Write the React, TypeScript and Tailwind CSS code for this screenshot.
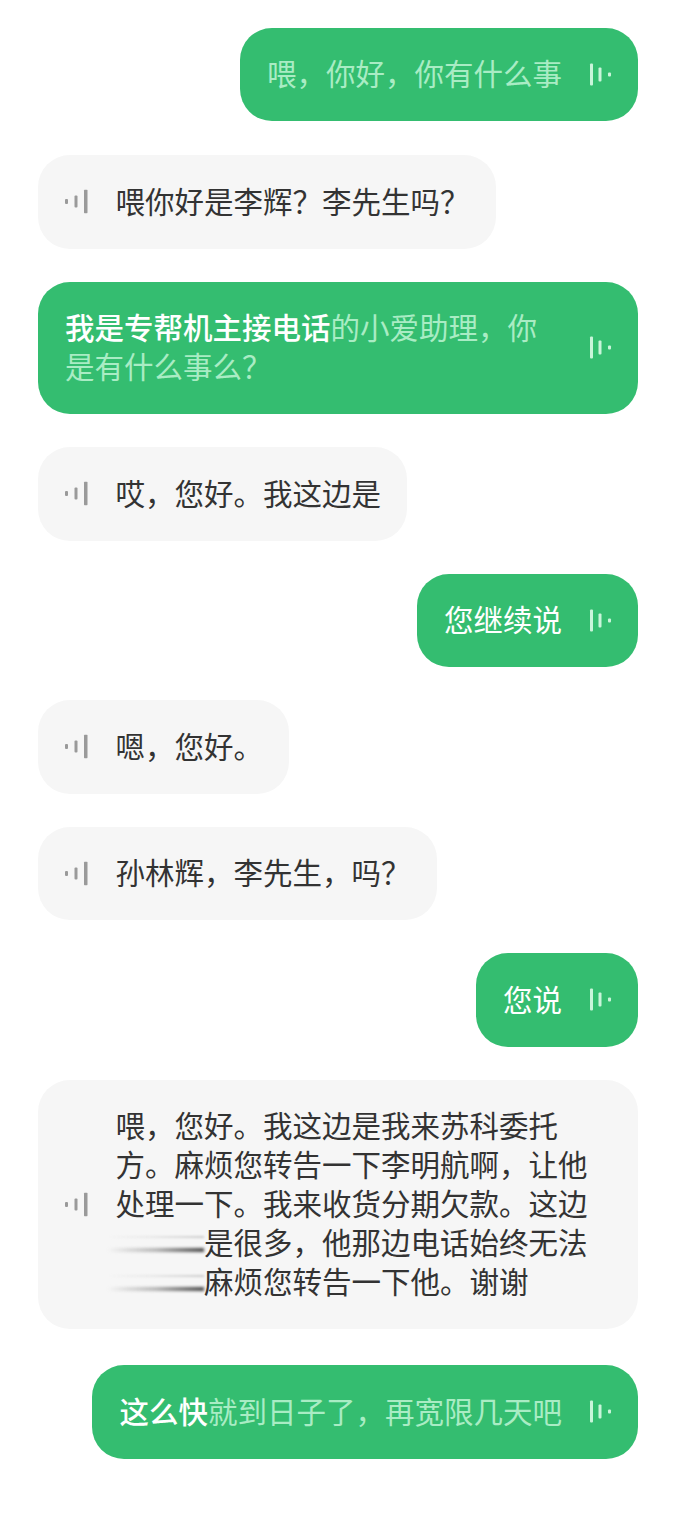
import type { ReactNode } from 'react';

function WaveIcon({ mine }: { mine: boolean }) {
  return mine ? (
    <svg width="24" height="24" viewBox="0 0 24 24" className="shrink-0 text-[#c9f5da]" fill="currentColor">
      <rect x="1" y="1" width="3" height="22" rx="1" />
      <rect x="9.5" y="5" width="3" height="14" rx="1" />
      <rect x="19" y="10" width="3" height="4" rx="1" />
    </svg>
  ) : (
    <svg width="24" height="24" viewBox="0 0 24 24" className="shrink-0 text-[#9a9a9a]" fill="currentColor">
      <rect x="1" y="9.5" width="3" height="5" rx="1" />
      <rect x="10.5" y="6" width="3" height="12" rx="1" />
      <rect x="20" y="0" width="3.5" height="24" rx="1" />
    </svg>
  );
}

function Mine({ children, wide, className }: { children: ReactNode; wide?: boolean; className?: string }) {
  return (
    <div className={`flex items-center self-end rounded-[32px] bg-[#34bd70] pb-[28.75px] pl-[27px] pr-[25px] pt-[25.75px] text-[#a9ecc4] ${wide ? 'w-full' : 'gap-[27px]'} ${className ?? ''}`}>
      <div className={wide ? 'w-[473px]' : ''}>{children}</div>
      <div className={`-mb-[3px] -mt-[3px] translate-y-[1.5px] ${wide ? 'ml-auto' : ''}`}>
        <WaveIcon mine />
      </div>
    </div>
  );
}

function Theirs({ children, wide }: { children: ReactNode; wide?: boolean }) {
  return (
    <div className={`flex items-center gap-[27.5px] rounded-[32px] bg-[#f6f6f6] pb-[28.75px] pl-[26px] pr-[26px] pt-[25.75px] text-[#333333] ${wide ? 'self-stretch' : 'self-start'}`}>
      <div className="translate-y-[1.5px]">
        <WaveIcon mine={false} />
      </div>
      <div>{children}</div>
    </div>
  );
}

function Smudge() {
  return (
    <span className="relative inline-block h-[39px] w-[88.5px] align-top">
      <span className="absolute bottom-[9px] left-[-8px] right-0 h-[4px] bg-gradient-to-r from-transparent via-[#b5b5b5] to-[#4a4a4a] blur-[1.5px]" />
      <span className="absolute bottom-[23px] left-[-8px] right-0 h-[2px] bg-gradient-to-r from-transparent via-[#e6e6e6] to-[#cdcdcd] blur-[1px]" />
    </span>
  );
}

export default function App() {
  return (
    <div className="min-h-[1524px] bg-white pb-[60px] pl-[38px] pr-[46px] pt-[27.5px] font-['Noto_Sans_CJK_SC',sans-serif] text-[29.5px] leading-[39px]">
      <div className="flex flex-col gap-[33px]">
        <Mine className="mb-px">喂，你好，你有什么事</Mine>
        <Theirs>喂你好是李辉？李先生吗？</Theirs>
        <Mine wide>
          <span className="font-medium text-white">我是专帮机主接电话</span>的小爱助理，你
          <br />
          是有什么事么？
        </Mine>
        <Theirs>哎，您好。我这边是</Theirs>
        <Mine>
          <span className="text-white">您继续说</span>
        </Mine>
        <Theirs>嗯，您好。</Theirs>
        <Theirs>孙林辉，李先生，吗？</Theirs>
        <Mine>
          <span className="text-white">您说</span>
        </Mine>
        <Theirs wide>
          <div className="w-[473px]">
            喂，您好。我这边是我来苏科委托方。麻烦您转告一下李明航啊，让他处理一下。我来收货分期欠款。这边
            <br />
            <Smudge />是很多，他那边电话始终无法
            <br />
            <Smudge />麻烦您转告一下他。谢谢
          </div>
        </Theirs>
        <Mine className="mt-[3px]">
          <span className="font-medium text-white">这么快</span>就到日子了，再宽限几天吧
        </Mine>
      </div>
    </div>
  );
}
